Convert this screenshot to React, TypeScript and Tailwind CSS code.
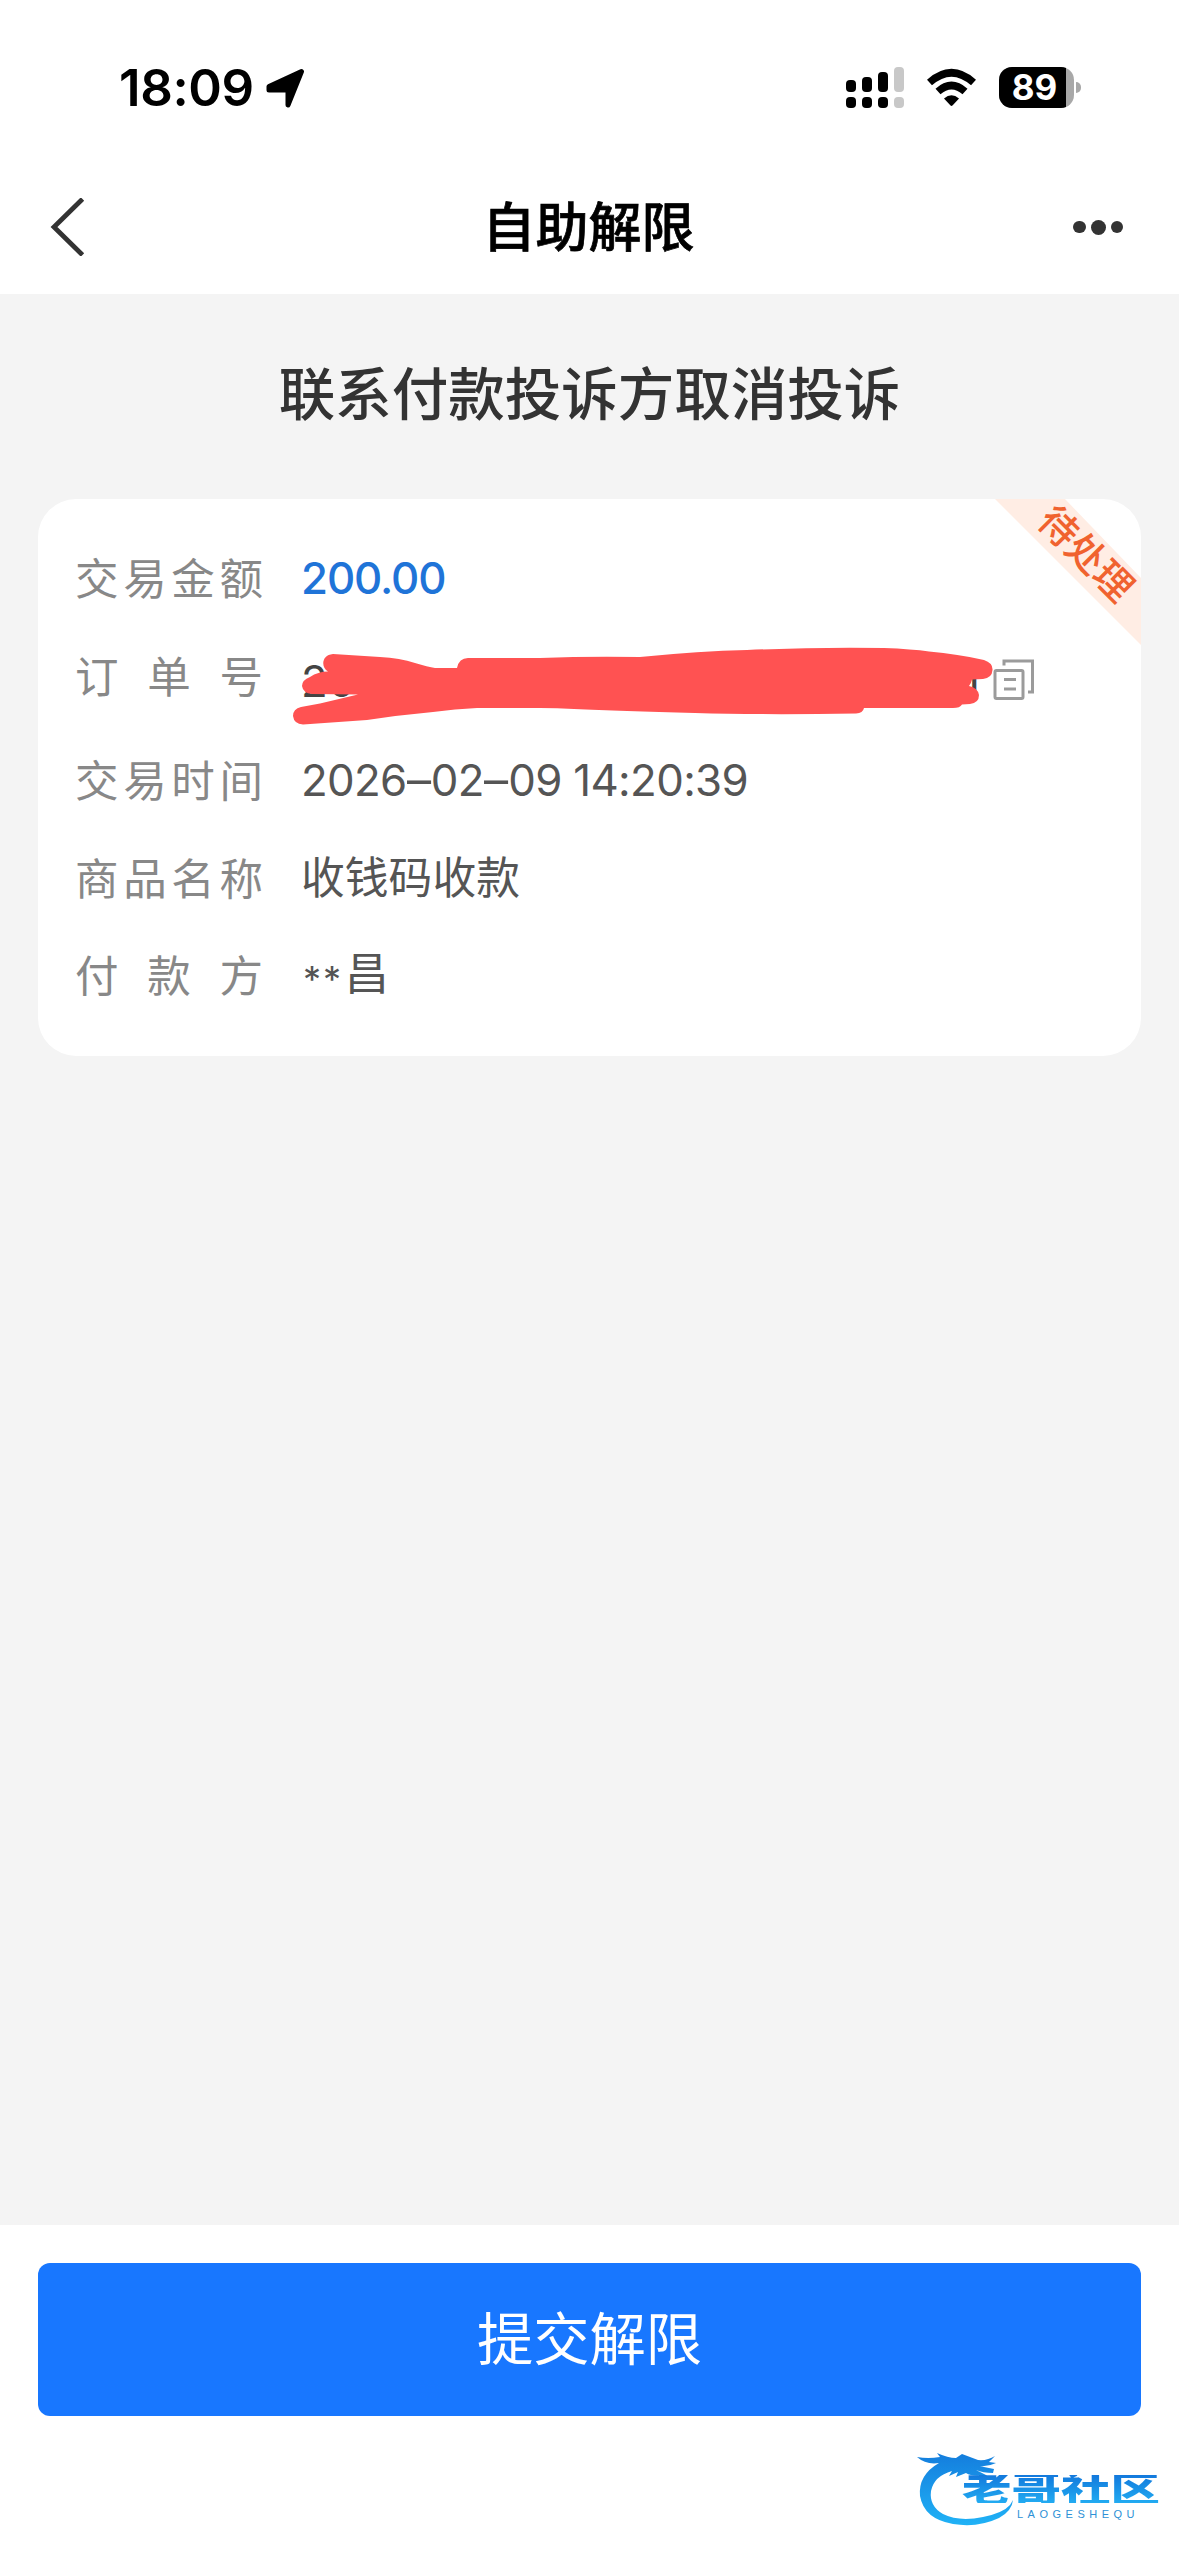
import type { ReactNode } from "react";

function StatusBar() {
  return (
    <div className="flex h-[160px] items-start pl-[119px] pr-[98px] pt-[65px] text-black">
      <span className="h-[46px] w-[147px] whitespace-nowrap text-[51px] font-semibold leading-[46px] tracking-[-0.4px]">18:09</span>
      <svg className="mt-[3px] h-[42px] w-[42px]" viewBox="0 0 42 42">
        <path d="M3 18.5 35.5 3.5 22 37V22H3Z" fill="#000" stroke="#000" strokeWidth="5" strokeLinejoin="round" />
      </svg>
      <div className="flex-1" />
      <svg className="mt-[1px] h-[44px] w-[60px]" viewBox="0 0 60 44">
        <rect x="0" y="14" width="10" height="12" rx="4" />
        <rect x="16" y="11" width="10" height="15" rx="4" />
        <rect x="32" y="6" width="10" height="20" rx="4" />
        <rect x="48" y="1" width="10" height="25" rx="4" fill="#c8c8c8" />
        <rect x="0" y="31" width="10" height="11" rx="4" />
        <rect x="16" y="31" width="10" height="11" rx="4" />
        <rect x="32" y="31" width="10" height="11" rx="4" />
        <rect x="48" y="31" width="10" height="11" rx="4" fill="#c8c8c8" />
      </svg>
      <svg className="ml-[20px] mt-[3px] h-[40px] w-[52px]" viewBox="0 0 52 40">
        <path d="M3.5 14.5Q25.5-5 47.5 14.5" fill="none" stroke="#000" strokeWidth="7.5" />
        <path d="M12 23.5Q25.5 11.5 39 23.5" fill="none" stroke="#000" strokeWidth="7.5" />
        <path d="M18 30.5Q25.5 24 33 30.5L26.7 37.3Q25.5 38.5 24.3 37.3Z" />
      </svg>
      <div className="ml-[21px] mt-[2px] flex items-center">
        <div className="h-[41px] w-[75px] overflow-hidden rounded-[13px] bg-[#a8a8a8]">
          <div className="h-full w-[67px] bg-black pl-[4px] text-center text-[35px] font-bold leading-[41px] text-white">89</div>
        </div>
        <div className="ml-[2px] h-[11px] w-[5px] rounded-r-full bg-[#a8a8a8]" />
      </div>
    </div>
  );
}

function NavBar() {
  return (
    <header className="flex h-[134px] items-center justify-between pl-[50px] pr-[54px]">
      <svg className="h-[58px] w-[74px]" viewBox="0 0 74 58">
        <path d="M32.5 1 4 29 32.5 57" fill="none" stroke="#333" strokeWidth="4.8" />
      </svg>
      <h1 className="translate-x-[1px] translate-y-[1px] text-[53px] font-medium leading-[60px] text-black [-webkit-text-stroke:0.7px_black]">自助解限</h1>
      <div className="flex w-[74px] items-center justify-end gap-[5px] pr-[2px]">
        <i className="size-[12.5px] rounded-full bg-[#333]" />
        <i className="size-[15px] rounded-full bg-[#333]" />
        <i className="size-[12.5px] rounded-full bg-[#333]" />
      </div>
    </header>
  );
}

function Row({ label, height, children }: { label: string; height: string; children: ReactNode }) {
  return (
    <div className={"flex items-center " + height}>
      <div className="flex w-[188px] justify-between text-[43.5px] leading-[60px] text-[#888]">
        {label.split("").map((c, i) => (
          <span key={i}>{c}</span>
        ))}
      </div>
      <div className="ml-[38px] text-[43.8px] leading-[60px] text-[#555]">{children}</div>
    </div>
  );
}

function Dash() {
  return <span className="mx-[1.5px] inline-block scale-x-[1.1]">–</span>;
}

function OrderNumber() {
  return (
    <div className="relative flex h-[60px] w-[735px] translate-y-[5px] items-center">
      <div className="flex w-[681px] justify-between text-[#444]">
        <span>20</span>
        <span>1</span>
      </div>
      <svg className="ml-[12px] h-[44px] w-[44px] shrink-0 translate-y-[-2px]" viewBox="0 0 44 44" fill="none" stroke="#9b9b9b" strokeWidth="3">
        <rect x="3" y="12.5" width="28" height="28" rx="1.5" />
        <path d="M12 7.5V3H40.5V34H36M12 21.5h12M12 31h12" />
      </svg>
      {/* redaction stroke over the order number */}
      <svg className="absolute left-[-11px] top-[-11px] h-[84px] w-[704px]" viewBox="290 640 704 84">
        <path
          fill="#ff5252"
          d="M328 670.5C321 667 321 654 333 653L380 656Q400 657 415 662Q428 666 435 667H457Q459 657 468 657L540 657Q590 655 640 656Q700 650 747 649Q815 646 884 647Q912 648 929 650.5Q958 653 984 659Q993 662 992.5 669Q992 677 983 678L972 678.5Q971 683 969 685Q978 687 979 694Q979 702 970 703L962 703.5Q960 707 953 707H864Q863 712 856 712.5Q764 714 695 712Q620 710 574 708Q557 707 540 707L477 707Q455 708 433 711Q400 714 367 719L303 723.5Q294 723 293 715Q293 708 301 706L320 702.5L358 693.5L312 693Q303 692 302 685Q302 679 310 676Q318 670.5 328 670.5Z"
        />
      </svg>
    </div>
  );
}

function StatusRibbon() {
  return (
    <div className="absolute right-0 top-0 size-[146px]">
      <svg className="size-[146px]" viewBox="0 0 146 146">
        <path d="M0 0H70L146 79V146Z" fill="#ffede4" />
      </svg>
      <span className="absolute left-[91px] top-[55px] -translate-x-1/2 -translate-y-1/2 rotate-45 whitespace-nowrap text-[38.5px] font-medium leading-none text-[#f0622f]">待处理</span>
    </div>
  );
}

function CommunityLogo() {
  return (
    <div className="relative h-[90px] w-[250px]">
      <svg className="absolute inset-0 h-[90px] w-[250px]" viewBox="0 0 250 90">
        <defs>
          <linearGradient id="dragon" x1="0" y1="0" x2="0" y2="1">
            <stop offset="0" stopColor="#147ddd" />
            <stop offset="1" stopColor="#20b2f6" />
          </linearGradient>
        </defs>
        <path
          fill="url(#dragon)"
          d="M1 9Q12 11 24 9L21 5Q32 10 40 10L46 6L62 12Q71 13 79 8L73 14L80 15Q72 19 63 18L78 21L77 25Q67 25 60 22L70 27Q56 29 50 25L40 29L42 24L33 28L36 23Q18 28 15 43Q13 58 27 66Q43 74 67 69Q87 65 94 57L97 52Q96 63 83 70Q62 80 37 76Q8 71 4 48Q2 27 23 15Q10 17 1 9Z"
        />
      </svg>
      <div className="absolute left-[46px] top-[21px] h-[40px] w-[200px] origin-left scale-y-[0.72] whitespace-nowrap bg-linear-to-b from-[#1478dc] to-[#23acf2] bg-clip-text text-[49.5px] font-black leading-[40px] text-transparent">
        老哥社区
      </div>
      <div className="absolute left-[101px] top-[59px] whitespace-nowrap font-['Liberation_Sans'] text-[11px] leading-[14px] tracking-[4.5px] text-[#2d91d6]">LAOGESHEQU</div>
    </div>
  );
}

export default function App() {
  return (
    <div className="flex h-[2556px] w-[1179px] flex-col overflow-hidden bg-white font-['Inter','Noto_Sans_CJK_SC',sans-serif]">
      <StatusBar />
      <NavBar />
      <main className="h-[1931px] bg-[#f4f4f4] px-[38px] pt-[65px]">
        <h2 className="text-center text-[56.5px] font-medium leading-[72px] text-[#333]">联系付款投诉方取消投诉</h2>
        <section className="relative mt-[68px] h-[557px] overflow-hidden rounded-[38px] bg-white pl-[37px] pt-[31px]">
          <Row label="交易金额" height="h-[98px]">
            <span className="font-medium tracking-[-1.1px] text-[#1f74d8]">200.00</span>
          </Row>
          <Row label="订单号" height="h-[98px]">
            <OrderNumber />
          </Row>
          <Row label="交易时间" height="h-[110px]">
            <span className="tracking-[-0.65px]">
              2026<Dash />02<Dash />09 14:20:39
            </span>
          </Row>
          <Row label="商品名称" height="h-[86px]">收钱码收款</Row>
          <Row label="付款方" height="h-[108px]">
            <span className="inline-block w-[44px] translate-y-[2px] pl-[2px] text-[36px] tracking-[2px]">**</span>昌
          </Row>
          <StatusRibbon />
        </section>
      </main>
      <footer className="flex flex-1 flex-col bg-white px-[38px] pt-[38px]">
        <button className="h-[153px] w-full shrink-0 rounded-[12px] bg-[#1877ff] text-[56.3px] leading-[153px] text-white">提交解限</button>
        <div className="-mr-[25px] mt-[32px] self-end">
          <CommunityLogo />
        </div>
      </footer>
    </div>
  );
}
